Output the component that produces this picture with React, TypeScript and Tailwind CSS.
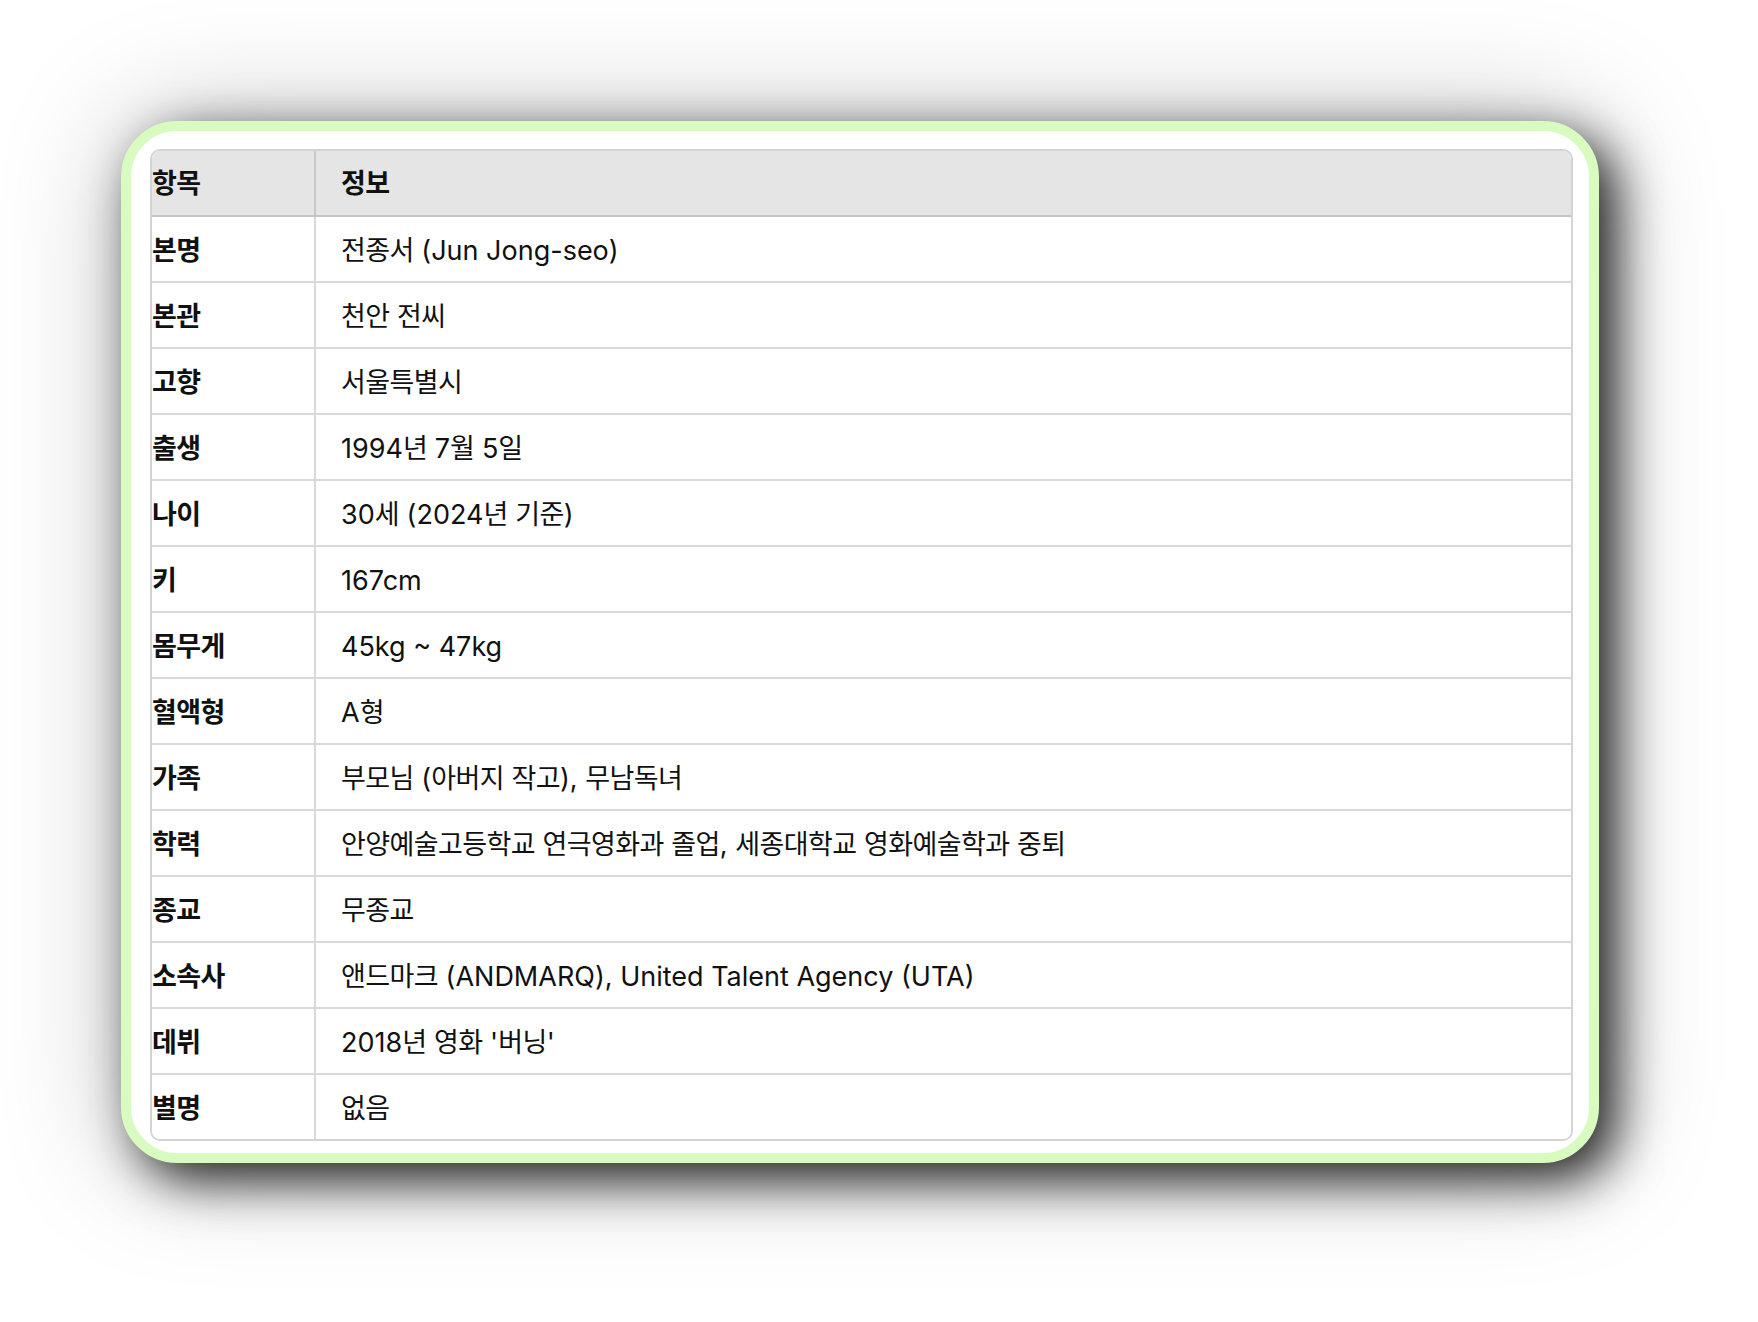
import React from "react";

const rows: [string, string][] = [
  ["본명", "전종서 (Jun Jong-seo)"],
  ["본관", "천안 전씨"],
  ["고향", "서울특별시"],
  ["출생", "1994년 7월 5일"],
  ["나이", "30세 (2024년 기준)"],
  ["키", "167cm"],
  ["몸무게", "45kg ~ 47kg"],
  ["혈액형", "A형"],
  ["가족", "부모님 (아버지 작고), 무남독녀"],
  ["학력", "안양예술고등학교 연극영화과 졸업, 세종대학교 영화예술학과 중퇴"],
  ["종교", "무종교"],
  ["소속사", "앤드마크 (ANDMARQ), United Talent Agency (UTA)"],
  ["데뷔", "2018년 영화 '버닝'"],
  ["별명", "없음"],
];

function T({ s }: { s: string }) {
  const parts = s.split(/([\uAC00-\uD7A3]+)/);
  return (
    <span className="whitespace-pre">
      {parts.map((p, i) =>
        i % 2 === 1 ? (
          <span key={i} className="tracking-[-0.6px]">
            {p}
          </span>
        ) : (
          <React.Fragment key={i}>{p}</React.Fragment>
        )
      )}
    </span>
  );
}

export default function App() {
  return (
    <div
      className="min-h-screen w-full bg-white pt-[121px] pl-[121px] text-[27px] text-[#111111]"
      style={{ fontFamily: 'Inter, "Noto Sans CJK KR", sans-serif' }}
    >
      <div className="box-border w-[1478px] h-[1042px] rounded-[56px] border-[10px] border-[#d8fcc0] bg-white shadow-[17px_17px_50px_rgba(0,0,0,0.85),0_0_120px_rgba(0,0,0,0.25)] pt-[18px] pl-[19px] pr-[16px]">
        <div className="rounded-[10px] border-2 border-[#d4d4d4] overflow-hidden">
          <div className="flex h-[66px] bg-[#e5e5e5] border-b-2 border-[#c4c4c4] font-bold">
            <div className="w-[164px] shrink-0 flex items-center pt-[3px] border-r-2 border-[#c8c8c8]">
              <T s="항목" />
            </div>
            <div className="flex-1 flex items-center pt-[3px] pl-[25px]">
              <T s="정보" />
            </div>
          </div>
          {rows.map(([k, v], i) => (
            <div
              key={k}
              className={
                i === rows.length - 1
                  ? "flex h-[64px] bg-white"
                  : "flex h-[66px] bg-white border-b-2 border-[#d9d9d9]"
              }
            >
              <div className="w-[164px] shrink-0 flex items-center pt-[4px] border-r-2 border-[#d9d9d9] font-bold">
                <T s={k} />
              </div>
              <div className="flex-1 flex items-center pt-[4px] pl-[25px]">
                <T s={v} />
              </div>
            </div>
          ))}
        </div>
      </div>
    </div>
  );
}
